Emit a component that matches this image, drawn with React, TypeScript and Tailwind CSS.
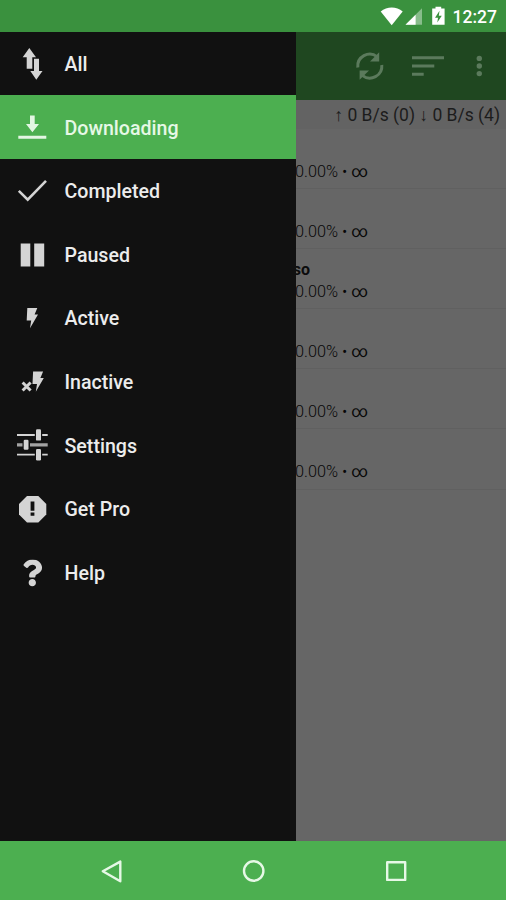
import type { ReactNode } from "react";
import { FaQuestion } from "react-icons/fa";

interface MenuItem {
  id: number;
  label: string;
  icon: ReactNode;
}

const BOLT = "M11.3 6H21.3L18.6 12.5H22L14 26.2L15.2 18.5H10.7Z";

const menuItems: MenuItem[] = [
  {
    id: 1,
    label: "All",
    icon: (
      <path d="M13.3 0L20 9.2H16.3V20.8H10.7V9.2H6.7ZM18 10.8H23V23H26.5L20.3 31.8L14.3 23H18Z" />
    ),
  },
  {
    id: 2,
    label: "Downloading",
    icon: <path d="M14 4.5H18.7V13H23L16.4 21.3L10 13H14ZM2.3 24.7H30.3V27.7H2.3Z" />,
  },
  {
    id: 3,
    label: "Completed",
    icon: (
      <path d="M2.8 15.8L11.7 24.7L30 5.8" fill="none" stroke="currentColor" strokeWidth="2.6" />
    ),
  },
  {
    id: 4,
    label: "Paused",
    icon: <path d="M4.7 4.6H14.3V27.4H4.7ZM18.2 4.6H28.2V27.4H18.2Z" />,
  },
  { id: 5, label: "Active", icon: <path d={BOLT} /> },
  {
    id: 6,
    label: "Inactive",
    icon: (
      <>
        <path d={BOLT} transform="translate(5.8 -0.5)" />
        <path d="M6.6 16.5L14.6 24.5M14.6 16.5L6.6 24.5" stroke="currentColor" strokeWidth="3" />
      </>
    ),
  },
  {
    id: 7,
    label: "Settings",
    icon: (
      <>
        <path
          d="M1 6H18.8M26.2 6H31.7M1 25.6H18.8M26.2 25.6H31.7"
          stroke="currentColor"
          strokeWidth="1.8"
        />
        <path d="M1 15.8H6.5M14 15.8H31.7" stroke="#a3a3a3" strokeWidth="3.2" />
        <rect x="20" y="0.2" width="5" height="11.4" rx="1.2" />
        <rect x="7.7" y="10.8" width="4.8" height="10" rx="1.2" />
        <rect x="20" y="20" width="5" height="11.4" rx="1.2" />
      </>
    ),
  },
  {
    id: 8,
    label: "Get Pro",
    icon: (
      <>
        <path d="M11 3H22.3L30.3 11V21.4L22.3 29.4H11L3 21.4V11Z" />
        <path d="M14.6 8.5H18.4V17.7H14.6ZM14.6 19.5H18.4V22.7H14.6Z" fill="#111" />
      </>
    ),
  },
  { id: 9, label: "Help", icon: <FaQuestion x="2.8" y="2.4" size={27} /> },
];

const torrents = [
  { id: 1, suffix: "" },
  { id: 2, suffix: "" },
  { id: 3, suffix: "so" },
  { id: 4, suffix: "" },
  { id: 5, suffix: "" },
  { id: 6, suffix: "" },
];

const StatusBar = () => (
  <header className="flex h-[31.5px] shrink-0 items-center justify-end bg-[#3a913e] pr-[9px] text-white">
    <svg className="h-8 w-[70px]" viewBox="378 0 70 32" fill="currentColor">
      <path d="M380.7 11.5C387 6 396.5 6 402.7 11.5L391.7 25.3Z" />
      <path d="M422 8.3V24.7H405.5Z" opacity=".4" />
      <path d="M415.6 14.7V24.7H405.5Z" />
      <path d="M435.5 6.7H441.2V8.6H444.6V24.8H432.2V8.6H435.5Z" />
      <path d="M439.5 10.8L435 17.7H438L437.3 22.6L441.8 15.7H438.8Z" fill="#3a913e" />
    </svg>
    <span className="ml-[5px] pt-0.5 text-[17.5px] leading-[30px] font-medium">12:27</span>
  </header>
);

const Toolbar = () => (
  <div className="h-[68.5px] shrink-0 bg-[#1f4720] text-[#5b7a5c]">
    <svg className="h-full w-full" viewBox="296 32 210 68.5" fill="currentColor">
      <g fill="none" stroke="currentColor" strokeWidth="3">
        <path d="M357.8 67.5A12 12 0 0 1 377.2 56.8" />
        <path d="M381.8 65A12 12 0 0 1 362.3 75.4" />
      </g>
      <path d="M379.2 52.3V61.5H370Z" />
      <path d="M359.6 79.8V70.6H369Z" />
      <path d="M412 56.3H444V59.3H412ZM412 64.6H434.3V67.6H412ZM412 72.8H423.7V75.8H412Z" />
      <circle cx="479.3" cy="58.4" r="2.7" />
      <circle cx="479.3" cy="66" r="2.7" />
      <circle cx="479.3" cy="73.6" r="2.7" />
    </svg>
  </div>
);

const Drawer = () => (
  <nav className="w-[296px] shrink-0 bg-[#111]">
    {menuItems.map((item) => (
      <div
        key={item.id}
        className={`flex h-[63.6px] items-center pt-px pl-4 ${
          item.label === "Downloading"
            ? "bg-[#4caf50] text-[#e3f6e3]"
            : "text-[#d4d4d4]"
        }`}
      >
        <svg className="size-8 shrink-0" viewBox="0 0 32 32" fill="currentColor">
          {item.icon}
        </svg>
        <span
          className={`ml-[16.5px] pt-0.5 text-[19.6px] font-medium ${
            item.label === "Downloading" ? "text-[#e6f8e6]" : "text-[#ececec]"
          }`}
        >
          {item.label}
        </span>
      </div>
    ))}
  </nav>
);

const TorrentList = () => (
  <main className="flex min-w-0 flex-1 flex-col overflow-hidden bg-[#666]">
    <Toolbar />
    <div className="flex h-[29px] shrink-0 items-center justify-end border-b border-[#636363] bg-[#636363] pt-[3px] pr-1.5 text-[17.5px] whitespace-pre text-[#1c1c1c]">
      ↑ 0 B/s (0) ↓ 0 B/s (4)
    </div>
    {torrents.map((t) => (
      <div key={t.id} className="h-[60.1px] shrink-0 border-b border-[#606060] pt-[9px]">
        <div className="flex h-[23px] w-3.5 items-center justify-end text-base font-bold text-[#0c0c0c]">
          {t.suffix}
        </div>
        <div className="-ml-px text-[16.3px] leading-[22px] font-light text-[#080808]">
          0.00% • <span className="font-normal">∞</span>
        </div>
      </div>
    ))}
  </main>
);

const NavigationBar = () => (
  <footer className="h-[59px] shrink-0 bg-[#4caf50] text-[#e6f8e6]">
    <svg
      className="h-full w-full"
      viewBox="0 841 506 59"
      fill="none"
      stroke="currentColor"
      strokeWidth="2.4"
      strokeLinejoin="round"
    >
      <path d="M102.8 871.2L120.3 861.6V881.2Z" />
      <circle cx="253.7" cy="871" r="9.7" />
      <rect x="387.2" y="862.3" width="18" height="17.6" />
    </svg>
  </footer>
);

const App = () => {
  return (
    <div className="flex h-[900px] w-[506px] flex-col overflow-hidden font-['Roboto',sans-serif]">
      <StatusBar />
      <div className="flex min-h-0 flex-1">
        <Drawer />
        <TorrentList />
      </div>
      <NavigationBar />
    </div>
  );
};

export default App;
